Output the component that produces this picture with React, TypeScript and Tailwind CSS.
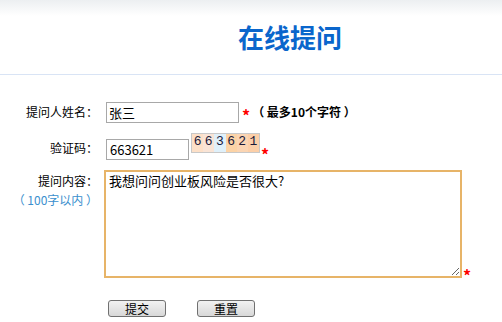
import { useState } from "react"

const font = { fontFamily: '"Noto Sans CJK SC", "Liberation Sans", sans-serif' }

export default function App() {
  const [name, setName] = useState("张三")
  const [code, setCode] = useState("663621")
  const [content, setContent] = useState("我想问问创业板风险是否很大?")

  return (
    <div className="w-[502px] h-[322px] bg-white text-[12px] text-black overflow-hidden" style={font}>
      {/* Header */}
      <div className="h-[75px] border-b border-[#d9e4f5] bg-gradient-to-b from-[#eceff1] to-white to-[16px] flex justify-center pl-[78px] pt-[20px]">
        <h1 className="text-[26px] leading-[34px] font-bold text-[#0a66cc]">在线提问</h1>
      </div>

      <div className="pt-[27px]">
        {/* name */}
        <div className="flex items-center h-[21px]">
          <div className="w-[98px] text-right leading-[21px] -mt-[2px]">提问人姓名：</div>
          <input
            value={name}
            onChange={(e) => setName(e.target.value)}
            className="ml-[8px] w-[133px] h-[21px] border border-[#a8a8a8] px-[2px] text-[13px] outline-none"
          />
          <span className="ml-[3px] text-[#ff0000] text-[16px] font-bold leading-none mt-[4px]">*</span>
          <span className="ml-[2px] font-bold -mt-[2px]">（ 最多10个字符 ）</span>
        </div>

        {/* captcha */}
        <div className="flex items-start mt-[10px] h-[27px]">
          <div className="w-[98px] text-right leading-[21px] mt-[4px]">验证码：</div>
          <input
            value={code}
            onChange={(e) => setCode(e.target.value)}
            className="ml-[8px] mt-[6px] w-[83px] h-[21px] border border-[#a8a8a8] px-[3px] text-[13px] outline-none"
          />
          <div className="ml-[2px] w-[69px] h-[20px] border border-[#c8c8c8] flex font-mono text-[13px] leading-[16px] text-[#1a1a3a]">
            <span className="flex-1 text-center bg-[#fde0c8]">6</span>
            <span className="flex-1 text-center bg-[#f9e4d6]">6</span>
            <span className="flex-1 text-center bg-[#dff0fa]">3</span>
            <span className="flex-1 text-center bg-[#fcd3a6]">6</span>
            <span className="flex-1 text-center bg-[#fbd5b3]">2</span>
            <span className="flex-1 text-center bg-[#fccfa8]">1</span>
          </div>
          <span className="ml-[1px] mt-[13px] text-[#ff0000] text-[16px] font-bold leading-none">*</span>
        </div>

        {/* content */}
        <div className="flex items-start mt-[10px]">
          <div className="w-[98px] text-right">
            <div className="leading-[21px]">提问内容：</div>
            <div className="leading-[18px] text-[#3a8fce]">（ 100字以内 ）</div>
          </div>
          <textarea
            value={content}
            onChange={(e) => setContent(e.target.value)}
            className="ml-[6px] w-[358px] h-[108px] border-2 border-[#e7b468] px-[3px] py-0 text-[13px] leading-[18px] outline-none resize-y"
          />
          <span className="ml-[1px] mt-[97px] text-[#ff0000] text-[16px] font-bold leading-none">*</span>
        </div>

        {/* buttons */}
        <div className="flex mt-[17px] pl-[108px] gap-[31px]">
          <button className="w-[58px] h-[17px] border border-[#707070] rounded-[3px] bg-gradient-to-b from-[#f2f2f2] to-[#d8d8d8] text-[12px] leading-[15px]">
            提交
          </button>
          <button className="w-[58px] h-[17px] border border-[#707070] rounded-[3px] bg-gradient-to-b from-[#f2f2f2] to-[#d8d8d8] text-[12px] leading-[15px]">
            重置
          </button>
        </div>
      </div>
    </div>
  )
}
